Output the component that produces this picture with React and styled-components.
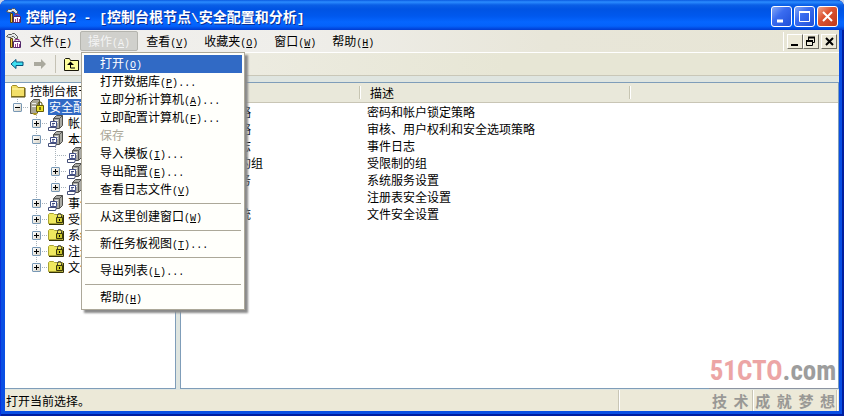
import React from "react";
import styled, { createGlobalStyle, css } from "styled-components";

const Global = createGlobalStyle`
  * { box-sizing: border-box; }
  html, body, #root { height: 100%; }
  body {
    margin: 0;
    background: #c9d4e8;
    font: 12px/16px "Noto Sans CJK SC", sans-serif;
    color: #000;
    overflow: hidden;
  }
  button { font: inherit; color: inherit; }
`;

const Frame = styled.div`
  position: relative;
  display: flex;
  flex-direction: column;
  height: 100vh;
  padding: 0 5px 5px;
  overflow: hidden;
  border-radius: 7px 7px 0 0;
  background: #0a4fe4;
  box-shadow: inset 1px 0 #0831d9, inset -2px 0 #001ea0, inset 0 -2px #001ea0;
`;

const TitleBar = styled.header`
  display: flex;
  flex: none;
  align-items: center;
  gap: 4px;
  height: 30px;
  margin: 0 -5px;
  padding: 2px 6px 0;
  background: linear-gradient(#0a5ae0 0, #2b8cff 2px, #0a5fe6 5px, #0054e3 9px, #0058ee 16px, #0566ff 22px, #0462fb 26px, #003bd0 30px);
`;

const Title = styled.h1`
  flex: 1;
  margin: 0;
  color: #fff;
  font-size: 14px;
  line-height: 20px;
  font-weight: 700;
  text-shadow: 1px 1px #0a2f94;
  white-space: pre;
`;

const Mono = styled.span`
  font-family: "Liberation Mono", monospace;
  font-size: ${(p) => (p.$large ? "13px" : "10px")};
  line-height: 12px;
`;

const CaptionButton = styled.button`
  display: grid;
  place-items: center;
  width: 21px;
  height: 21px;
  margin-left: -2px;
  padding: 0;
  border: 1px solid #fff;
  border-radius: 3px;
  background: ${(p) =>
    p.$close
      ? "linear-gradient(135deg, #f0a58c, #dd5432 40%, #c0391a)"
      : "linear-gradient(135deg, #86a8f5, #3a6cf0 40%, #1f4fd8)"};
`;

const MenuBar = styled.nav`
  display: flex;
  flex: none;
  align-items: center;
  height: 23px;
  padding-left: 1px;
  background: linear-gradient(90deg, #f1f0ee 0, #efeeea 35%, #e8e6d9 65%, #e7e5d5);
  border-bottom: 1px solid #fff;
`;

const MenuSlot = styled.div`
  position: relative;
`;

const MenuButton = styled.button`
  display: block;
  height: 20px;
  padding: 0 7px;
  border: 1px solid transparent;
  background: none;
  line-height: 18px;
  white-space: nowrap;
  ${(p) =>
    p.$open &&
    css`
      border-color: #b4b4ae;
      border-radius: 2px;
      background: #d0d0cc;
      color: #f4f4f4;
    `}
`;

const Popup = styled.div`
  position: absolute;
  z-index: 3;
  top: 21px;
  left: 1px;
  width: 164px;
  padding: 2px;
  border: 1px solid #aca899;
  background: #fffffb;
  box-shadow: 3px 3px 2px #8a8a8a;
`;

const PopupItem = styled.button`
  display: block;
  width: 100%;
  height: 18px;
  padding: 0 0 2px 16px;
  border: 0;
  background: ${(p) => (p.$active ? "#316ac5" : "none")};
  color: ${(p) => (p.$active ? "#fff" : "#000")};
  line-height: 16px;
  text-align: left;
  white-space: nowrap;
  &:disabled { color: #aca899; }
`;

const PopupRule = styled.hr`
  height: 1px;
  margin: 4px 1px;
  border: 0;
  background: #aca899;
`;

const ChildControls = styled.div`
  display: flex;
  margin-left: auto;
  padding: 2px 2px 2px 3px;
  border-left: 1px solid #fff;
`;

const ChildButton = styled.button`
  display: grid;
  place-items: center;
  width: 16px;
  height: 15px;
  padding: 0;
  border: 1px solid;
  border-color: #fff #716f64 #716f64 #fff;
  background: #ece9d8;
  &:last-child { margin-left: 2px; }
`;

const ToolBar = styled.div`
  display: flex;
  flex: none;
  align-items: center;
  height: 23px;
  border-bottom: 1px solid #c9c7b8;
  background: linear-gradient(90deg, #f1f0ec 0, #ecebe0 30%, #e7e6d5 60%);
`;

const ToolButton = styled.button`
  display: grid;
  place-items: center;
  width: 23px;
  height: 22px;
  padding: 0;
  border: 0;
  background: none;
`;

const ToolRule = styled.span`
  width: 1px;
  height: 18px;
  margin: 0 4px;
  background: #c5c2b5;
`;

const Workspace = styled.main`
  display: grid;
  flex: 1;
  grid-template-columns: 171px 1fr;
  gap: 4px;
  min-height: 0;
  padding: 6px 0 1px;
  background: #dfe5e0;
`;

const Pane = styled.section`
  overflow: hidden;
  border: 1px solid #7f9db9;
  border-left-width: ${(p) => (p.$flush ? "0" : "1px")};
  background: #fff;
`;

const TreeList = styled.ul`
  margin: 0;
  padding: 0;
  list-style: none;
`;

const TreeRow = styled.li`
  display: flex;
  align-items: center;
  height: 16px;
  padding-left: 5px;
  white-space: nowrap;
`;

const RootRow = styled(TreeRow)`
  gap: 4px;
`;

const Guide = styled.span`
  flex: none;
  align-self: stretch;
  width: 19px;
  background: ${(p) =>
    p.$line ? "repeating-linear-gradient(#a9b4bc 0 1px, transparent 1px 2px) 7px 0 / 1px 100% no-repeat" : "none"};
`;

const Branch = styled.span`
  display: grid;
  flex: none;
  align-items: center;
  align-self: stretch;
  width: 19px;
  padding-left: 3px;
  background:
    repeating-linear-gradient(#a9b4bc 0 1px, transparent 1px 2px) 7px 0 / 1px ${(p) => (p.$last ? "8px" : "100%")} no-repeat,
    repeating-linear-gradient(90deg, #a9b4bc 0 1px, transparent 1px 2px) 7px 8px / 12px 1px no-repeat;
`;

const Expander = styled.button`
  display: block;
  width: 9px;
  height: 9px;
  padding: 0;
  border: 1px solid #7898b5;
  border-radius: 1px;
  background:
    linear-gradient(#000, #000) center / 5px 1px no-repeat,
    linear-gradient(#000, #000) center / 1px ${(p) => (p.$open ? "1px" : "5px")} no-repeat,
    linear-gradient(135deg, #fff, #d8d4c8);
`;

const TreeLabel = styled.span`
  margin-left: 3px;
  padding: 0 1px;
  line-height: 16px;
  ${(p) =>
    p.$selected &&
    css`
      background: #316ac5;
      color: #fff;
    `}
`;

const Table = styled.table`
  width: 100%;
  table-layout: fixed;
  border-collapse: separate;
  border-spacing: 0;
`;

const HeadCell = styled.th`
  width: ${(p) => p.$width || "auto"};
  height: 20px;
  padding: 1px 9px 0;
  border-bottom: 1px solid #c8c5b5;
  background:
    linear-gradient(#fff, #fff) right center / 1px 13px no-repeat,
    linear-gradient(#c7c5b2, #c7c5b2) right 1px center / 1px 13px no-repeat,
    #e9e8da;
  font-weight: 400;
  line-height: 18px;
  text-align: left;
  &:last-child { background: #e9e8da; }
`;

const Cell = styled.td`
  height: 17px;
  padding: 0 0 0 6px;
  line-height: 16px;
  white-space: nowrap;
`;

const NameBox = styled.div`
  display: flex;
  align-items: center;
  gap: 3px;
  margin-left: -3px;
  height: 16px;
`;

const StatusBar = styled.footer`
  display: grid;
  flex: none;
  grid-template-columns: 1fr 134px 84px;
  height: 21px;
  padding-right: 2px;
  background: #ece9d8;
`;

const StatusCell = styled.div`
  margin-bottom: 2px;
  padding-left: 1px;
  border-right: 1px solid #c9c6b6;
  box-shadow: 1px 0 #fff;
  line-height: 21px;
`;

const Watermark = styled.div`
  position: absolute;
  right: 7px;
  bottom: 6px;
  width: 128px;
  color: #858585;
  opacity: 0.8;
  pointer-events: none;
`;

const Brand = styled.div`
  display: flex;
  justify-content: center;
  height: 33px;
  border-bottom: 1px solid #90939c;
  font: 700 27px/30px "Liberation Sans Narrow", "Roboto Condensed", "Liberation Sans", sans-serif;
`;

const BrandRed = styled.span`
  color: #e88f8f;
`;

const Slogan = styled.div`
  display: flex;
  justify-content: space-between;
  padding: 3px 2px 0 3px;
  font-size: 15px;
  font-weight: 700;
  line-height: 18px;
`;

const Glyph = styled.svg`
  display: block;
  flex: none;
`;

const ConsoleIcon = () => (
  <Glyph width="16" height="16" viewBox="0 0 16 16">
    <path d="M.5 3.500l2-2h3l1-1h2l3 3v2h-2l-2-2H6l-1 1H3z" fill="#e4e8e8" stroke="#555" />
    <path d="M4.500 5.500h2v9h-2z" fill="#f0c33c" stroke="#5b4310" />
    <path d="M7.500 8.500h7v6h-7z" fill="#fff" stroke="#52266a" />
    <path d="M9 8V6.500h4V8M9.500 11v3m2-4v4m2-3v3" fill="none" stroke="#963a8c" />
  </Glyph>
);

const FolderIcon = () => (
  <Glyph width="16" height="16" viewBox="0 0 16 16">
    <path d="M1.500 13.500v-10l1-1h4l1.500 2h6.500v9z" fill="#f3df68" stroke="#a18c25" />
    <path d="M2 6h12" stroke="#fff6af" />
    <path d="M1 14h14V5" fill="none" stroke="#51470e" />
  </Glyph>
);

const LockFolderIcon = () => (
  <Glyph width="16" height="16" viewBox="0 0 16 16">
    <path d="M.5 12.500v-9l1-1h4l1 1h8v9z" fill="#efe85f" stroke="#a9a333" />
    <path d="M1 13.500h14.500V4" fill="none" stroke="#343208" />
    <path d="M9.500 6V4.500q0-2 2-2t2 2V6" fill="none" stroke="#333" />
    <path d="M8.500 6.500h6v5h-6z" fill="#c9c52a" stroke="#3b390a" />
    <path d="M11 8h1v2h-1z" fill="#000" />
  </Glyph>
);

const ServerIcon = () => (
  <Glyph width="16" height="16" viewBox="0 0 16 16">
    <path d="M5.500 3.500l3-3h6v10l-3 3h-6z" fill="#aaaaa4" stroke="#4e4e4c" />
    <path d="M11.500 13V3.500h-6m6 0l3-3" fill="none" stroke="#555" />
    <path d="M7 5.500h3m-3 2h3" stroke="#eee" />
    <path d="M2.500 6.500h6v5h-6z" fill="#fff" stroke="#435087" />
    <path d="M4 8.500h3m-3 1.500h2" stroke="#435087" />
    <path d="M.5 12.500h8l-1 3h-7z" fill="#fff" stroke="#444e78" />
  </Glyph>
);

const SecurityIcon = () => (
  <Glyph width="16" height="16" viewBox="0 0 16 16">
    <path d="M1.500 3.500l3-3h6v11l-3 3h-6z" fill="#aaa797" stroke="#555148" />
    <path d="M3 4.500h4M3 7.500h4" stroke="#eee" />
    <path d="M3 14h6l-2 2H5z" fill="#a89122" />
    <path d="M9 7V5q0-2 2-2t2 2v2" fill="none" stroke="#555000" />
    <path d="M7.500 6.500h7v6h-7z" fill="#e9df29" stroke="#655d05" />
    <path d="M11 8v3" stroke="#000" />
  </Glyph>
);

const BackIcon = () => (
  <Glyph width="14" height="12" viewBox="0 0 14 12">
    <path d="M1 6l5-4.500V4h7v3.500H6v3z" fill="#3fe0f0" stroke="#07507a" />
  </Glyph>
);

const ForwardIcon = () => (
  <Glyph width="14" height="12" viewBox="0 0 14 12">
    <path d="M13 6L8 1v3H1v4h7v3z" fill="#aaa99e" />
  </Glyph>
);

const UpIcon = () => (
  <Glyph width="16" height="15" viewBox="0 0 16 15">
    <path d="M.5 13.500v-11l1-1h4l1 2h8v10z" fill="#ffff9d" stroke="#17160a" />
    <path d="M6.500 7v4H11" fill="none" stroke="#000" />
    <path d="M3 8l3.500-3.500L10 8z" fill="#000" />
  </Glyph>
);

const MENUS = [
  ["文件", "F"],
  ["操作", "A"],
  ["查看", "V"],
  ["收藏夹", "O"],
  ["窗口", "W"],
  ["帮助", "H"],
];

const ACTIONS = [
  { text: "打开", mnemonic: "O", active: true },
  { text: "打开数据库", mnemonic: "P", more: true },
  { text: "立即分析计算机", mnemonic: "A", more: true },
  { text: "立即配置计算机", mnemonic: "F", more: true },
  { text: "保存", disabled: true },
  { text: "导入模板", mnemonic: "I", more: true },
  { text: "导出配置", mnemonic: "E", more: true },
  { text: "查看日志文件", mnemonic: "V" },
  null,
  { text: "从这里创建窗口", mnemonic: "W" },
  null,
  { text: "新任务板视图", mnemonic: "T", more: true },
  null,
  { text: "导出列表", mnemonic: "L", more: true },
  null,
  { text: "帮助", mnemonic: "H" },
];

const TREE = [
  { text: "帐户策略", depth: 2, icon: ServerIcon, state: "closed" },
  { text: "本地策略", depth: 2, icon: ServerIcon, state: "open" },
  { text: "审核策略", depth: 3, icon: ServerIcon },
  { text: "用户权利指派", depth: 3, icon: ServerIcon, state: "closed" },
  { text: "安全选项", depth: 3, icon: ServerIcon, state: "closed", last: true },
  { text: "事件日志", depth: 2, icon: ServerIcon, state: "closed" },
  { text: "受限制的组", depth: 2, icon: LockFolderIcon, state: "closed" },
  { text: "系统服务", depth: 2, icon: LockFolderIcon, state: "closed" },
  { text: "注册表", depth: 2, icon: LockFolderIcon, state: "closed" },
  { text: "文件系统", depth: 2, icon: LockFolderIcon, state: "closed", last: true },
];

const POLICIES = [
  ["帐户策略", "密码和帐户锁定策略", ServerIcon],
  ["本地策略", "审核、用户权利和安全选项策略", ServerIcon],
  ["事件日志", "事件日志", ServerIcon],
  ["受限制的组", "受限制的组", LockFolderIcon],
  ["系统服务", "系统服务设置", LockFolderIcon],
  ["注册表", "注册表安全设置", LockFolderIcon],
  ["文件系统", "文件安全设置", LockFolderIcon],
];

const Mnemonic = ({ letter, more }) => (
  <Mono>
    (<u>{letter}</u>){more && "..."}
  </Mono>
);

const ActionMenu = () => (
  <Popup role="menu">
    {ACTIONS.map((item, i) =>
      item ? (
        <PopupItem key={i} role="menuitem" $active={item.active} disabled={item.disabled}>
          {item.text}
          {item.mnemonic && <Mnemonic letter={item.mnemonic} more={item.more} />}
        </PopupItem>
      ) : (
        <PopupRule key={i} />
      )
    )}
  </Popup>
);

const TreeItem = ({ text, depth, icon: Icon, state, last }) => (
  <TreeRow>
    {depth > 1 && <Guide />}
    {depth > 2 && <Guide $line />}
    <Branch $last={last}>
      {state && <Expander $open={state === "open"} aria-label={text} aria-expanded={state === "open"} />}
    </Branch>
    <Icon />
    <TreeLabel>{text}</TreeLabel>
  </TreeRow>
);

export default function App() {
  return (
    <Frame>
      <Global />
      <TitleBar>
        <ConsoleIcon />
        <Title>
          控制台<Mono $large>2 - [</Mono>控制台根节点<Mono $large>\</Mono>安全配置和分析<Mono $large>]</Mono>
        </Title>
        <CaptionButton aria-label="最小化">
          <Glyph width="15" height="15"><path d="M3 12h6" stroke="#fff" strokeWidth="3" /></Glyph>
        </CaptionButton>
        <CaptionButton aria-label="最大化">
          <Glyph width="15" height="15">
            <path d="M2.500 2.500h10v10h-10z" fill="none" stroke="#fff" />
            <path d="M2 3h11" stroke="#fff" strokeWidth="2" />
          </Glyph>
        </CaptionButton>
        <CaptionButton $close aria-label="关闭">
          <Glyph width="15" height="15"><path d="M3 3l9 9m0-9l-9 9" stroke="#fff" strokeWidth="2" /></Glyph>
        </CaptionButton>
      </TitleBar>
      <MenuBar>
        <ConsoleIcon />
        {MENUS.map(([text, key]) => (
          <MenuSlot key={key}>
            <MenuButton $open={key === "A"} aria-haspopup="menu" aria-expanded={key === "A"}>
              {text}
              <Mnemonic letter={key} />
            </MenuButton>
            {key === "A" && <ActionMenu />}
          </MenuSlot>
        ))}
        <ChildControls>
          <ChildButton aria-label="最小化窗口">
            <Glyph width="12" height="11"><path d="M2 9h7" stroke="#000" strokeWidth="2" /></Glyph>
          </ChildButton>
          <ChildButton aria-label="还原窗口">
            <Glyph width="12" height="11">
              <path d="M3.500 4V1.500h6v5H8" fill="none" stroke="#000" />
              <path d="M3 1.500h7M1 5h7" stroke="#000" strokeWidth="2" />
              <path d="M1.500 4.500h6v5h-6z" fill="none" stroke="#000" />
            </Glyph>
          </ChildButton>
          <ChildButton aria-label="关闭窗口">
            <Glyph width="12" height="11"><path d="M3 2l7 7m0-7l-7 7" stroke="#000" strokeWidth="2" /></Glyph>
          </ChildButton>
        </ChildControls>
      </MenuBar>
      <ToolBar>
        <ToolButton aria-label="后退"><BackIcon /></ToolButton>
        <ToolButton aria-label="前进"><ForwardIcon /></ToolButton>
        <ToolRule />
        <ToolButton aria-label="上移一级"><UpIcon /></ToolButton>
      </ToolBar>
      <Workspace>
        <Pane $flush>
          <TreeList>
            <RootRow>
              <FolderIcon />
              控制台根节点
            </RootRow>
            <TreeRow>
              <Branch $last>
                <Expander $open aria-label="安全配置和分析" aria-expanded="true" />
              </Branch>
              <SecurityIcon />
              <TreeLabel $selected>安全配置和分析</TreeLabel>
            </TreeRow>
            {TREE.map((item) => (
              <TreeItem key={item.text} {...item} />
            ))}
          </TreeList>
        </Pane>
        <Pane>
          <Table>
            <thead>
              <tr>
                <HeadCell $width="180px">对象名称</HeadCell>
                <HeadCell $width="270px">描述</HeadCell>
                <HeadCell />
              </tr>
            </thead>
            <tbody>
              {POLICIES.map(([name, description, Icon]) => (
                <tr key={name}>
                  <Cell>
                    <NameBox>
                      <Icon />
                      {name}
                    </NameBox>
                  </Cell>
                  <Cell>{description}</Cell>
                  <Cell />
                </tr>
              ))}
            </tbody>
          </Table>
        </Pane>
      </Workspace>
      <StatusBar>
        <StatusCell>打开当前选择。</StatusCell>
        <StatusCell />
        <StatusCell />
      </StatusBar>
      <Watermark>
        <Brand>
          <BrandRed>51CTO</BrandRed>.com
        </Brand>
        <Slogan>
          {[..."技术成就梦想"].map((c) => (
            <span key={c}>{c}</span>
          ))}
        </Slogan>
      </Watermark>
    </Frame>
  );
}
